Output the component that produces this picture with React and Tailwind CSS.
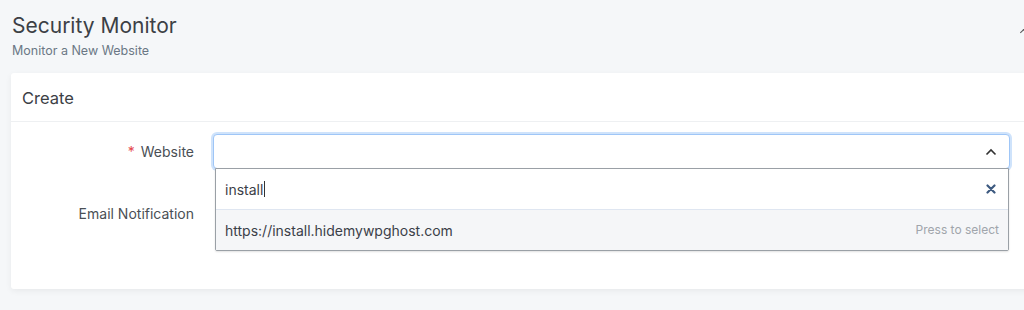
import React from "react";

export default function App() {
  return (
    <div className="w-[1024px] h-[310px] overflow-hidden bg-[#f5f7f9] relative" style={{ fontFamily: "Inter, 'Liberation Sans', sans-serif" }}>
      <div className="absolute right-[-2px] top-[30px] w-[5px] h-[5px] border-t-[1.5px] border-l-[1.5px] border-[#555] rotate-45" />
      <div className="pl-[12px] pt-[12px]">
        <h1 className="text-[21px] leading-[28px] text-[#3c4045]">Security Monitor</h1>
        <p className="text-[12.5px] leading-[16px] mt-[3px] text-[#6b7785]">Monitor a New Website</p>
      </div>
      <div className="ml-[11px] mt-[14px] w-[1030px] h-[216px] bg-white rounded-[3px] shadow-[0_2px_6px_rgba(0,0,0,0.06)]">
        <div className="h-[49px] flex items-center pl-[11px] pt-[2px] border-b border-[#eef0f2]">
          <span className="text-[16.5px] text-[#3c4045]">Create</span>
        </div>
        <div className="flex mt-[12px]">
          <div className="w-[184px] shrink-0 flex flex-col items-end pr-[1px]">
            <div className="h-[34px] flex items-center text-[14px] text-[#4a4f55]">
              <span className="text-[#e5484d] mr-[6px]">*</span>Website
            </div>
            <div className="mt-[36px] leading-[20px] text-[14px] text-[#4a4f55]">Email Notification</div>
          </div>
          <div className="ml-[18px] w-[797px] relative">
            <div className="h-[35px] rounded-[4px] border border-[#9fc6f7] ring-[2px] ring-[#cfe3fb] bg-white flex items-center justify-end pr-[12px]">
              <svg width="12" height="8" viewBox="0 0 12 8" fill="none"><path d="M1.5 6.5 6 2l4.5 4.5" stroke="#333" strokeWidth="1.6" /></svg>
            </div>
            <div className="absolute left-[2px] right-[1px] top-[34px] bg-white border border-[#9aa0a6] rounded-b-[2px] shadow-[0_1px_2px_rgba(0,0,0,0.12)]">
              <div className="h-[41px] flex items-center justify-between pl-[9px] pr-[12px] border-b border-[#dfe6f1]">
                <span className="text-[14px] text-[#3b4048] flex items-center">install<span className="inline-block w-[1px] h-[16px] bg-[#333] ml-[1px]" /></span>
                <svg width="10" height="10" viewBox="0 0 10 10"><path d="M1.5 1.5l7 7M8.5 1.5l-7 7" stroke="#3d5a80" strokeWidth="2.2" strokeLinecap="round" /></svg>
              </div>
              <div className="h-[40px] bg-[#f5f6f8] flex items-center justify-between pl-[9px] pr-[9px]">
                <span className="text-[14px] text-[#3b4048]">https://install.hidemywpghost.com</span>
                <span className="text-[12px] text-[#a0a5ab]">Press to select</span>
              </div>
            </div>
          </div>
        </div>
      </div>
    </div>
  );
}
